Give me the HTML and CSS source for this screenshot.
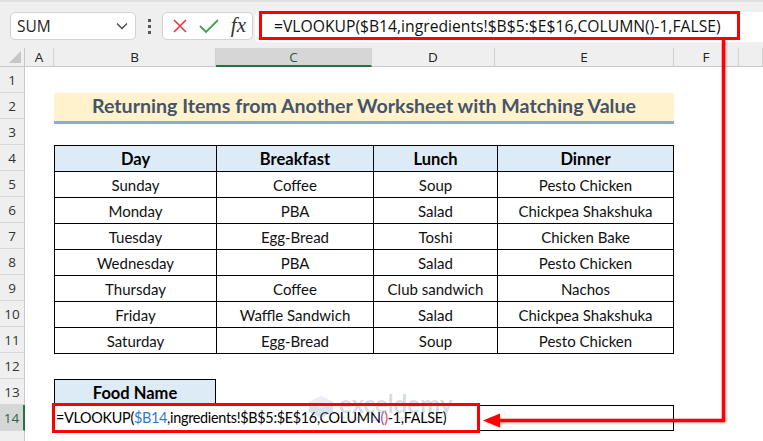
FILE: index.html
```html
<!DOCTYPE html>
<html lang="en">
<head>
    <meta charset="UTF-8">
    <title>VLOOKUP from Another Worksheet</title>
    <link rel="stylesheet" href="styles.css">
</head>
<body>
<div class="page">
    <!-- Formula bar -->
    <div class="toolbar">
        <div class="namebox">
            <span>SUM</span>
            <svg class="chevron" width="12" height="8" viewBox="0 0 12 8"><path d="M1 1.5 L6 6.5 L11 1.5" fill="none" stroke="#444" stroke-width="1.3"/></svg>
        </div>
        <div class="dots"><i></i><i></i><i></i></div>
        <div class="fxbox">
            <svg width="16" height="16" viewBox="0 0 16 16"><path d="M2 2 L14 14 M14 2 L2 14" stroke="#e8383d" stroke-width="1.6" fill="none"/></svg>
            <svg width="20" height="16" viewBox="0 0 20 16"><path d="M1 8 L7 14 L19 2" stroke="#3fa34d" stroke-width="1.8" fill="none"/></svg>
            <span class="fx">fx</span>
        </div>
        <div class="formula">=VLOOKUP($B14,ingredients!$B$5:$E$16,COLUMN()-1,FALSE)</div>
    </div>

    <!-- Worksheet -->
    <div class="sheet">
        <div class="corner"><span></span></div>
        <div class="colhead">A</div>
        <div class="colhead">B</div>
        <div class="colhead active">C</div>
        <div class="colhead">D</div>
        <div class="colhead">E</div>
        <div class="colhead">F</div>
        <div class="colhead"></div>

        <div class="rowhead r1">1</div>
        <div class="rowhead r2">2</div>
        <div class="rowhead r3">3</div>
        <div class="rowhead r4">4</div>
        <div class="rowhead r5">5</div>
        <div class="rowhead r6">6</div>
        <div class="rowhead r7">7</div>
        <div class="rowhead r8">8</div>
        <div class="rowhead r9">9</div>
        <div class="rowhead r10">10</div>
        <div class="rowhead r11">11</div>
        <div class="rowhead r12">12</div>
        <div class="rowhead r13">13</div>
        <div class="rowhead r14 active">14</div>
        <div class="rowhead r15"></div>

        <div class="title">Returning Items from Another Worksheet with Matching Value</div>

        <table class="meals">
            <thead>
                <tr><th>Day</th><th>Breakfast</th><th>Lunch</th><th>Dinner</th></tr>
            </thead>
            <tbody>
                <tr><td>Sunday</td><td>Coffee</td><td>Soup</td><td>Pesto Chicken</td></tr>
                <tr><td>Monday</td><td>PBA</td><td>Salad</td><td>Chickpea Shakshuka</td></tr>
                <tr><td>Tuesday</td><td>Egg-Bread</td><td>Toshi</td><td>Chicken Bake</td></tr>
                <tr><td>Wednesday</td><td>PBA</td><td>Salad</td><td>Pesto Chicken</td></tr>
                <tr><td>Thursday</td><td>Coffee</td><td>Club sandwich</td><td>Nachos</td></tr>
                <tr><td>Friday</td><td>Waffle Sandwich</td><td>Salad</td><td>Chickpea Shakshuka</td></tr>
                <tr><td>Saturday</td><td>Egg-Bread</td><td>Soup</td><td>Pesto Chicken</td></tr>
            </tbody>
        </table>

        <div class="food-label">Food Name</div>
        <div class="result">=VLOOKUP(<span class="ref">$B14</span>,ingredients!$B$5:$E$16,COLUMN<span class="p1">(</span><span class="p2">)</span>-1,FALSE)</div>
    </div>

    <!-- Watermark -->
    <div class="watermark">
        <svg width="26" height="24" viewBox="0 0 26 24"><path d="M13 1 L25 7 L25 17 L13 23 L1 17 L1 7 Z" fill="#8fa3c4"/><path d="M13 1 L25 7 L13 13 L1 7 Z" fill="#b7c5dc"/></svg>
        <div class="wm-text">
            <span class="wm-name">exceldemy</span>
            <span class="wm-tag">EXCEL · DATA · BI</span>
        </div>
    </div>

    <!-- Callouts -->
    <div class="callout callout-bar"></div>
    <div class="callout callout-cell"></div>
    <svg class="arrow" width="763" height="441" viewBox="0 0 763 441">
        <path d="M723.5 40 L723.5 420.5 L496 420.5" fill="none" stroke="#ff0000" stroke-width="3.5"/>
        <polygon points="483,420.5 500,413.5 500,427.5" fill="#ff0000"/>
    </svg>
</div>
</body>
</html>
```

FILE: styles.css
```css
body {
    margin: 0;
    font-family: Lato, "Open Sans", sans-serif;
    background-color: #ffffff;
}

.page {
    position: relative;
    width: 763px;
    height: 441px;
    overflow: hidden;
}

/* Formula bar */
.toolbar {
    height: 48px;
    background-color: #efefef;
    display: flex;
    align-items: flex-start;
    padding-top: 10px;
    box-sizing: border-box;
    border-top: 2px solid #e2e2e2;
}

.namebox {
    margin-left: 10px;
    width: 126px;
    height: 28px;
    background-color: white;
    border: 1px solid #d2d2d2;
    border-radius: 5px;
    box-sizing: border-box;
    display: flex;
    align-items: center;
    justify-content: space-between;
    padding: 0 7px 0 6px;
    font-family: "Open Sans", sans-serif;
    font-size: 15.5px;
    color: #222;
}

.dots {
    width: 26px;
    height: 28px;
    display: flex;
    flex-direction: column;
    align-items: center;
    justify-content: center;
    gap: 3px;
}

.dots i {
    width: 3px;
    height: 3px;
    background-color: #555;
}

.fxbox {
    width: 91px;
    height: 28px;
    background-color: white;
    border: 1px solid #d2d2d2;
    border-radius: 5px;
    box-sizing: border-box;
    display: flex;
    align-items: center;
    justify-content: space-between;
    padding: 0 6px 0 9px;
}

.fx {
    font-family: "Liberation Serif", "DejaVu Serif", serif;
    font-style: italic;
    font-size: 21px;
    color: #333;
    line-height: 1;
    margin-top: -2px;
}

.formula {
    flex: 1;
    margin-left: 2px;
    height: 30px;
    background-color: white;
    border-radius: 5px 0 0 5px;
    padding-left: 19px;
    line-height: 29px;
    font-family: "Open Sans", sans-serif;
    font-size: 15.7px;
    color: #111;
    white-space: nowrap;
}

/* Worksheet grid */
.sheet {
    display: grid;
    grid-template-columns: 25px 29px 162px 156px 123px 179px 65px 1fr;
    grid-template-rows: 19px repeat(15, 26px);
    font-size: 15px;
    color: #111;
}

.corner {
    background-color: #efefef;
    border-right: 1px solid #c8c8c8;
    border-bottom: 1px solid #c8c8c8;
    position: relative;
}

.corner span {
    position: absolute;
    right: 3px;
    bottom: 3px;
    width: 0;
    height: 0;
    border-left: 12px solid transparent;
    border-bottom: 12px solid #c6c6c6;
}

.colhead {
    background-color: #efefef;
    border-right: 1px solid #d2d2d2;
    border-bottom: 1px solid #c8c8c8;
    text-align: center;
    line-height: 19px;
    font-family: "Open Sans", sans-serif;
    font-size: 13.5px;
    color: #222;
}

.colhead.active {
    background-color: #d6d6d6;
    border-bottom: 2px solid #217346;
    color: #1e5c38;
    line-height: 18px;
}

.rowhead {
    grid-column: 1;
    background-color: #efefef;
    border-right: 1px solid #c8c8c8;
    border-bottom: 1px solid #d8d8d8;
    text-align: center;
    line-height: 27px;
    font-family: "Open Sans", sans-serif;
    font-size: 13.5px;
    color: #333;
}

.rowhead.active {
    background-color: #d6d6d6;
    border-right: 2px solid #217346;
    color: #1e6b40;
}

.r1 { grid-row: 2; }
.r2 { grid-row: 3; }
.r3 { grid-row: 4; }
.r4 { grid-row: 5; }
.r5 { grid-row: 6; }
.r6 { grid-row: 7; }
.r7 { grid-row: 8; }
.r8 { grid-row: 9; }
.r9 { grid-row: 10; }
.r10 { grid-row: 11; }
.r11 { grid-row: 12; }
.r12 { grid-row: 13; }
.r13 { grid-row: 14; }
.r14 { grid-row: 15; }
.r15 { grid-row: 16; }

.title {
    grid-column: 3 / 7;
    grid-row: 3;
    background-color: #fff2cc;
    border-bottom: 3px solid #8eaadb;
    height: 28px;
    text-align: center;
    line-height: 26px;
    font-weight: bold;
    font-size: 19.6px;
    color: #44546a;
}

.meals {
    grid-column: 3 / 7;
    grid-row: 5 / 13;
    border-collapse: collapse;
    width: 100%;
    height: 100%;
}

.meals th, .meals td {
    border: 1px solid #000;
    text-align: center;
    padding: 0;
    height: 25px;
}

.meals th {
    background-color: #ddebf7;
    font-size: 16.5px;
    font-weight: bold;
    color: #000;
}

.meals th:nth-child(1) { width: 161px; }
.meals th:nth-child(2) { width: 156px; }
.meals th:nth-child(3) { width: 123px; }

.food-label {
    grid-column: 3;
    grid-row: 14;
    background-color: #ddebf7;
    border: 1px solid #000;
    border-bottom: none;
    text-align: center;
    line-height: 26px;
    font-size: 16.5px;
    font-weight: bold;
    color: #000;
}

.result {
    grid-column: 3 / 7;
    grid-row: 15;
    border: 1px solid #000;
    line-height: 24px;
    padding-left: 1px;
    white-space: nowrap;
    font-size: 14.4px;
    letter-spacing: -0.3px;
    color: #000;
}

.ref {
    color: #2a7bd0;
}

.p1 {
    color: #9b4fb0;
}

.p2 {
    color: #e0404a;
}

/* Watermark */
.watermark {
    position: absolute;
    left: 308px;
    top: 392px;
    display: flex;
    align-items: center;
    gap: 5px;
    opacity: 0.3;
}

.wm-text {
    display: flex;
    flex-direction: column;
    line-height: 1;
}

.wm-name {
    font-size: 24px;
    font-weight: bold;
    color: #7d90b0;
}

.wm-tag {
    font-size: 6px;
    letter-spacing: 1px;
    color: #7d90b0;
    margin-left: 3px;
}

/* Red callouts */
.callout {
    position: absolute;
    border: 3px solid #ff0000;
    box-sizing: border-box;
}

.callout-bar {
    left: 259px;
    top: 11px;
    width: 481px;
    height: 29px;
}

.callout-cell {
    left: 52px;
    top: 403px;
    width: 428px;
    height: 30px;
}

.arrow {
    position: absolute;
    left: 0;
    top: 0;
    pointer-events: none;
    filter: drop-shadow(1px 1px 1px rgba(0, 0, 0, 0.25));
}
```
